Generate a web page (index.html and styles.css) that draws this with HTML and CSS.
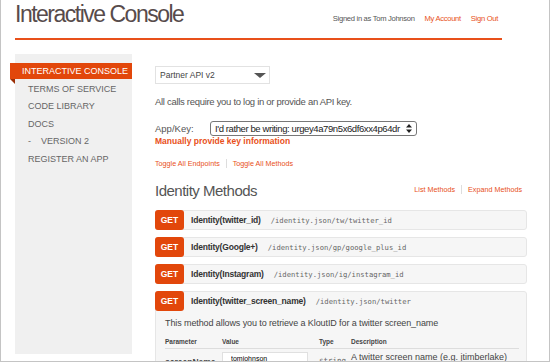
FILE: index.html
```html
<!DOCTYPE html>
<html lang="en">

<head>
    <meta charset="UTF-8">
    <title>Interactive Console</title>
    <link rel="stylesheet" href="styles.css">
</head>

<body>
    <div class="page">
        <div class="header">
            <h1>Interactive Console</h1>
            <div class="account">
                <span>Signed in as Tom Johnson</span>
                <a href="#">My Account</a>
                <a href="#">Sign Out</a>
            </div>
        </div>

        <div class="layout">
            <div class="sidebar">
                <a class="nav-item active" href="#">Interactive Console</a>
                <a class="nav-item" href="#">Terms of Service</a>
                <a class="nav-item" href="#">Code Library</a>
                <a class="nav-item" href="#">Docs</a>
                <a class="nav-item sub" href="#"><span class="dash">-</span>Version 2</a>
                <a class="nav-item" href="#">Register an App</a>
            </div>

            <div class="main">
                <div class="api-select">
                    <span>Partner API v2</span>
                    <span class="caret"></span>
                </div>

                <p class="note">All calls require you to log in or provide an API key.</p>

                <div class="key-row">
                    <label>App/Key:</label>
                    <div class="key-select">
                        <span>I'd rather be writing: urgey4a79n5x6df6xx4p64dr</span>
                        <span class="updown">
                            <svg width="6" height="9" viewBox="0 0 6 9">
                                <path d="M0 3.5 L3 0 L6 3.5 Z M0 5.5 L3 9 L6 5.5 Z" fill="#222" />
                            </svg>
                        </span>
                    </div>
                </div>
                <a class="manual" href="#">Manually provide key information</a>

                <div class="toggles">
                    <a href="#">Toggle All Endpoints</a>
                    <a href="#">Toggle All Methods</a>
                </div>

                <div class="section-head">
                    <h2>Identity Methods</h2>
                    <div class="section-links">
                        <a href="#">List Methods</a>
                        <a href="#">Expand Methods</a>
                    </div>
                </div>

                <div class="method">
                    <div class="method-bar">
                        <span class="verb">GET</span>
                        <span class="name">Identity(twitter_id)</span>
                        <span class="path">/identity.json/tw/twitter_id</span>
                    </div>
                </div>
                <div class="method">
                    <div class="method-bar">
                        <span class="verb">GET</span>
                        <span class="name">Identity(Google+)</span>
                        <span class="path">/identity.json/gp/google_plus_id</span>
                    </div>
                </div>
                <div class="method">
                    <div class="method-bar">
                        <span class="verb">GET</span>
                        <span class="name">Identity(Instagram)</span>
                        <span class="path">/identity.json/ig/instagram_id</span>
                    </div>
                </div>
                <div class="method open">
                    <div class="method-bar">
                        <span class="verb">GET</span>
                        <span class="name">Identity(twitter_screen_name)</span>
                        <span class="path">/identity.json/twitter</span>
                    </div>
                    <div class="method-body">
                        <p class="desc">This method allows you to retrieve a KloutID for a twitter screen_name</p>
                        <table class="params">
                            <thead>
                                <tr>
                                    <th>Parameter</th>
                                    <th>Value</th>
                                    <th>Type</th>
                                    <th>Description</th>
                                </tr>
                            </thead>
                            <tbody>
                                <tr>
                                    <td class="pname">screenName</td>
                                    <td><input type="text" value="tomjohnson"></td>
                                    <td class="ptype">string</td>
                                    <td>A twitter screen name (e.g. jtimberlake)</td>
                                </tr>
                            </tbody>
                        </table>
                    </div>
                </div>
            </div>
        </div>
    </div>
</body>

</html>
```

FILE: styles.css
```css
body {
    margin: 0;
    font-family: "Liberation Sans", Arial, sans-serif;
    background-color: white;
}

a {
    text-decoration: none;
    color: #e8501a;
}

.page {
    width: 550px;
    height: 362px;
    box-sizing: border-box;
    border: 1px solid #c4c4c4;
    border-top: none;
    overflow: hidden;
}

.header {
    display: flex;
    justify-content: space-between;
    align-items: flex-start;
    height: 38px;
    margin: 0 47px 0 14px;
    border-bottom: 2px solid #e8501a;
}

.header h1 {
    margin: 0;
    font-size: 23px;
    font-weight: normal;
    letter-spacing: -1.5px;
    color: #574b4b;
    line-height: 28px;
}

.account {
    display: flex;
    align-items: baseline;
    gap: 10px;
    margin: 14px 4px 0 0;
    font-size: 7.6px;
    letter-spacing: -0.3px;
    color: #555;
}

.account a {
    font-size: 7.6px;
}

.layout {
    display: flex;
    margin-top: 14px;
    height: 300px;
}

.sidebar {
    width: 117px;
    margin-left: 14px;
    padding-top: 9px;
    background-color: #f0f0f0;
    flex-shrink: 0;
}

.nav-item {
    display: block;
    height: 17.5px;
    line-height: 17.5px;
    padding-left: 13px;
    font-size: 9px;
    text-transform: uppercase;
    color: #666;
}

.nav-item.active {
    position: relative;
    height: 16px;
    line-height: 16px;
    margin-left: -5px;
    margin-bottom: 1.5px;
    padding-left: 12px;
    background-color: #e2470b;
    color: white;
}

.nav-item.active::after {
    content: "";
    position: absolute;
    left: 0;
    top: 16px;
    border-top: 5px solid #9c2e05;
    border-left: 5px solid transparent;
}

.nav-item .dash {
    margin-right: 10px;
}

.main {
    width: 373px;
    margin-left: 23px;
    padding-top: 12px;
    color: #555;
    flex-shrink: 0;
}

.api-select {
    display: flex;
    justify-content: space-between;
    align-items: center;
    width: 115px;
    height: 18px;
    box-sizing: border-box;
    padding: 0 3px 0 4px;
    border: 1px solid #e2e2e2;
    font-size: 8.5px;
    color: #444;
}

.caret {
    border-top: 5px solid #555;
    border-left: 6px solid transparent;
    border-right: 6px solid transparent;
    margin-top: 1px;
}

.note {
    margin: 12px 0 0;
    font-size: 9.5px;
    letter-spacing: -0.3px;
    color: #555;
}

.key-row {
    display: flex;
    align-items: center;
    margin-top: 14px;
}

.key-row label {
    width: 55px;
    font-size: 9.5px;
    color: #555;
}

.key-select {
    display: flex;
    justify-content: space-between;
    align-items: center;
    width: 207px;
    height: 15px;
    box-sizing: border-box;
    padding: 0 4px 0 4px;
    border: 1px solid #777;
    border-radius: 3px;
    font-size: 9.5px;
    letter-spacing: -0.4px;
    color: #222;
    white-space: nowrap;
}

.updown {
    display: flex;
}

.manual {
    display: block;
    margin-top: 0;
    font-size: 8.5px;
    font-weight: bold;
    color: #e8501a;
}

.toggles {
    display: flex;
    margin-top: 13px;
    font-size: 7.2px;
}

.toggles a + a {
    margin-left: 6px;
    padding-left: 6px;
    border-left: 1px solid #ddd;
}

.section-head {
    display: flex;
    justify-content: space-between;
    align-items: center;
    margin-top: 14px;
    width: 367px;
}

.section-head h2 {
    margin: 0;
    font-size: 15px;
    font-weight: normal;
    letter-spacing: -0.5px;
    color: #555;
}

.section-links {
    display: flex;
    font-size: 7.2px;
    margin-top: -2px;
}

.section-links a + a {
    margin-left: 6px;
    padding-left: 6px;
    border-left: 1px solid #ddd;
}

.method {
    width: 372px;
    margin-top: 7px;
    box-sizing: border-box;
    border: 1px solid #e6e6e6;
    border-radius: 3px;
    background-color: #f6f6f6;
}

.section-head + .method {
    margin-top: 11px;
}

.method-bar {
    display: flex;
    align-items: center;
    height: 18px;
}

.verb {
    width: 29px;
    height: 20px;
    line-height: 20px;
    margin: -1px 0 -1px -1px;
    border-radius: 3px;
    background-color: #e2470b;
    color: white;
    font-size: 8.5px;
    font-weight: bold;
    text-align: center;
}

.name {
    margin-left: 7px;
    font-size: 8.5px;
    font-weight: bold;
    letter-spacing: -0.2px;
    color: #333;
}

.path {
    margin-left: 10px;
    font-family: "DejaVu Sans Mono", monospace;
    font-size: 7.2px;
    color: #666;
}

.method-body {
    padding: 8px 9px 0;
}

.desc {
    margin: 0 0 10px;
    font-size: 9px;
    letter-spacing: -0.1px;
    color: #444;
}

.params {
    border-collapse: collapse;
    width: 354px;
}

.params th {
    padding: 0 0 3px;
    border-bottom: 1px solid #ddd;
    font-size: 6.5px;
    text-align: left;
    color: #444;
}

.params td {
    padding: 3px 0 0;
    font-size: 9px;
    color: #444;
    vertical-align: top;
}

.params th:nth-child(1) {
    width: 57px;
}

.params th:nth-child(2) {
    width: 97px;
}

.params th:nth-child(3) {
    width: 32px;
}

.params .pname {
    padding-top: 8px;
    font-weight: bold;
    font-size: 8.5px;
}

.params input {
    width: 86px;
    height: 12px;
    box-sizing: border-box;
    padding: 0 8px;
    border: 1px solid #e0e0e0;
    font-family: "Liberation Sans", Arial, sans-serif;
    font-size: 7px;
}

.params .ptype {
    padding-top: 7px;
    font-family: "DejaVu Sans Mono", monospace;
    font-size: 7.5px;
    color: #666;
}
```
